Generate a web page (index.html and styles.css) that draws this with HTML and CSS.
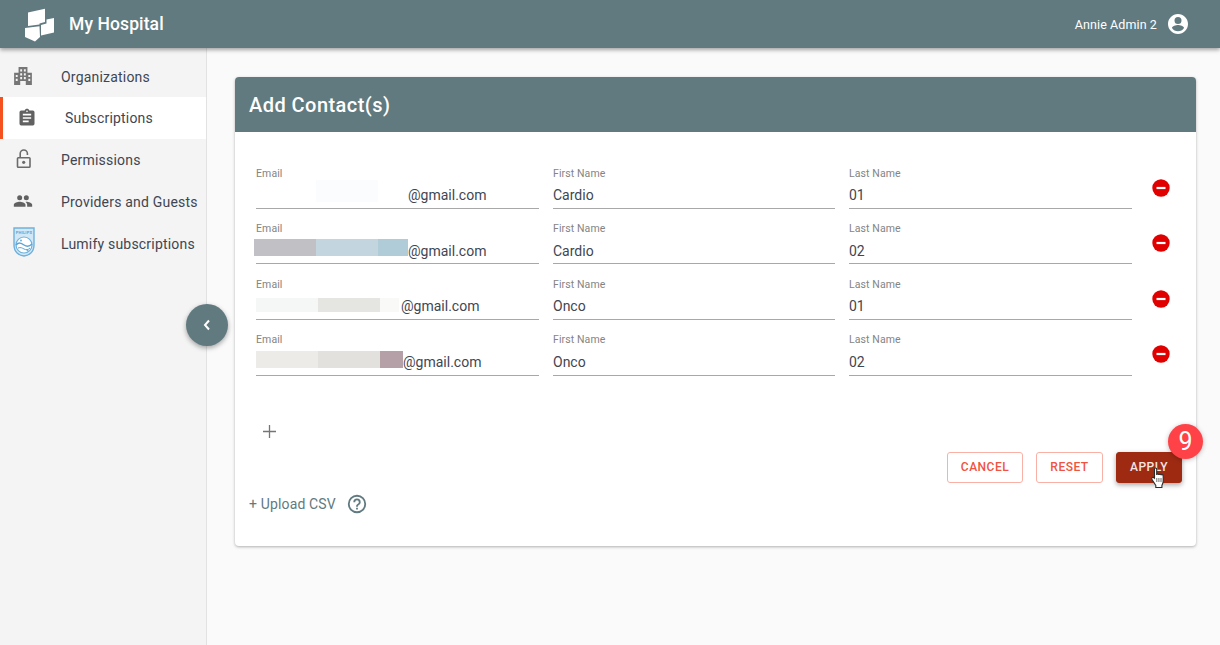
FILE: index.html
```html
<!DOCTYPE html>
<html lang="en">
<head>
<meta charset="utf-8">
<title>My Hospital</title>
<link rel="stylesheet" href="styles.css">
</head>
<body>
<header class="topbar">
  <div class="brand">
    <svg class="logo" viewBox="0 0 32 36"><path fill="#fff" d="M4 4.500 21 .7V14l-5.500 1.500v1L4 18zM22.500 11.500 30 10v14.500l-13 3V17l5.500-1.500zM1 20l14.500-1.700L16 29l-5 4.500L1 29z"/></svg>
    <span class="brand-name">My Hospital</span>
  </div>
  <div class="user">
    <span>Annie Admin 2</span>
    <svg class="user-icon" viewBox="0 0 24 24"><path fill="#fff" d="M12 2C6.480 2 2 6.480 2 12s4.480 10 10 10 10-4.480 10-10S17.520 2 12 2zm0 3a3.500 3.500 0 1 1 0 7 3.500 3.500 0 0 1 0-7zm0 14.200a7.200 7.200 0 0 1-6-3.220c.03-1.990 4-3.080 6-3.080s5.970 1.090 6 3.080a7.200 7.200 0 0 1-6 3.220z"/></svg>
  </div>
</header>
<div class="shell">
  <nav class="sidebar">
    <a class="nav-item">
      <svg class="nav-icon" viewBox="0 0 18 18"><path fill="#767676" fill-rule="evenodd" d="M5 1h8v5h4v11H1V6h4zM6.500 3v2h1.700V3zm3.300 0v2h1.700V3zM6.500 6.500v2h1.700v-2zm3.300 0v2h1.700v-2zM2.500 8v2h1.700V8zm0 3.500v2h1.700v-2zM6.500 10v2h1.700v-2zm3.300 0v2h1.700v-2zM13.800 8v2h1.700V8zm0 3.500v2h1.700v-2zM6.500 13.500V17h5v-3.500z"/></svg>
      <span>Organizations</span>
    </a>
    <a class="nav-item active">
      <svg class="nav-icon" viewBox="0 0 24 24"><path fill="#616161" d="M19 3h-4.180C14.400 1.840 13.300 1 12 1s-2.400.84-2.820 2H5a2 2 0 0 0-2 2v14a2 2 0 0 0 2 2h14a2 2 0 0 0 2-2V5a2 2 0 0 0-2-2zm-7 0a1 1 0 1 1 0 2 1 1 0 0 1 0-2zm2 14H7v-2h7zm3-4H7v-2h10zm0-4H7V7h10z"/></svg>
      <span>Subscriptions</span>
    </a>
    <a class="nav-item">
      <svg class="nav-icon" viewBox="0 0 20 20"><rect x="4.500" y="8.700" width="12.500" height="9.600" rx=".8" fill="none" stroke="#6b6b6b" stroke-width="1.600"/><path fill="none" stroke="#6b6b6b" stroke-width="1.600" d="M7.200 8.500V4.600a3.600 3.600 0 0 1 7.200 0V6"/><circle cx="10.700" cy="13.300" r="1.600" fill="#6b6b6b"/></svg>
      <span>Permissions</span>
    </a>
    <a class="nav-item">
      <svg class="nav-icon" viewBox="0 0 24 24"><path fill="#616161" d="M16 11a3 3 0 1 0 0-6 3 3 0 0 0 0 6zm-8 0a3 3 0 1 0 0-6 3 3 0 0 0 0 6zm0 2c-2.330 0-7 1.170-7 3.500V19h14v-2.500C15 14.170 10.330 13 8 13zm8 0c-.29 0-.62.02-.97.05C16.190 13.890 17 15.020 17 16.500V19h6v-2.500c0-2.330-4.670-3.500-7-3.500z"/></svg>
      <span>Providers and Guests</span>
    </a>
    <a class="nav-item">
      <svg class="nav-icon philips" viewBox="0 0 22 30">
        <path fill="#d3e8f6" stroke="#6fb1dc" stroke-width="1.400" d="M1 1h20v17c0 7-5 10.500-10 11C6 28.500 1 25 1 18z"/>
        <text class="shield-word" x="11" y="6.500" text-anchor="middle">PHILIPS</text>
        <circle cx="11" cy="18" r="8" fill="#fff" stroke="#6fb1dc" stroke-width="1.200"/>
        <path fill="none" stroke="#5aa5d6" stroke-width="1.500" d="M3 18c3-3 5-2 8 0s5 2 8-1"/>
        <path fill="none" stroke="#5aa5d6" stroke-width="1" d="M5 21c3-1 4 0 6 1s4 1 6-1"/>
        <circle cx="8" cy="13.500" r="1" fill="#6fb1dc"/>
        <circle cx="14.500" cy="23.500" r="1" fill="#6fb1dc"/>
      </svg>
      <span>Lumify subscriptions</span>
    </a>
    <button class="collapse" type="button" aria-label="Collapse">
      <svg viewBox="0 0 10 12" width="10" height="12"><path fill="none" stroke="#fff" stroke-width="2" d="M7 1.500 3 6l4 4.500"/></svg>
    </button>
  </nav>
  <main class="content">
    <section class="card">
      <h1 class="card-title">Add Contact(s)</h1>
      <div class="card-body">
        <div class="rows">
          <div class="row">
            <div class="field">
              <label>Email</label>
              <div class="value">
                <span class="mask first">
                  <i class="m w60"></i><i class="m w62 c1b"></i><i class="m w30"></i>
                </span><span>@gmail.com</span>
              </div>
            </div>
            <div class="field"><label>First Name</label><div class="value">Cardio</div></div>
            <div class="field"><label>Last Name</label><div class="value">01</div></div>
            <svg class="remove" viewBox="0 0 18 18"><circle cx="9" cy="9" r="8.700" fill="#e00000"/><rect x="4.500" y="7.900" width="9" height="2.200" fill="#fff"/></svg>
          </div>
          <div class="row">
            <div class="field">
              <label>Email</label>
              <div class="value">
                <span class="mask second">
                  <i class="m w62 c2a"></i><i class="m w62 c2b"></i><i class="m w30 c2c"></i>
                </span><span>@gmail.com</span>
              </div>
            </div>
            <div class="field"><label>First Name</label><div class="value">Cardio</div></div>
            <div class="field"><label>Last Name</label><div class="value">02</div></div>
            <svg class="remove" viewBox="0 0 18 18"><circle cx="9" cy="9" r="8.700" fill="#e00000"/><rect x="4.500" y="7.900" width="9" height="2.200" fill="#fff"/></svg>
          </div>
          <div class="row">
            <div class="field">
              <label>Email</label>
              <div class="value">
                <span class="mask third">
                  <i class="m w62 c3a"></i><i class="m w62 c3b"></i><i class="m w19 c3c"></i>
                </span><span>@gmail.com</span>
              </div>
            </div>
            <div class="field"><label>First Name</label><div class="value">Onco</div></div>
            <div class="field"><label>Last Name</label><div class="value">01</div></div>
            <svg class="remove" viewBox="0 0 18 18"><circle cx="9" cy="9" r="8.700" fill="#e00000"/><rect x="4.500" y="7.900" width="9" height="2.200" fill="#fff"/></svg>
          </div>
          <div class="row">
            <div class="field">
              <label>Email</label>
              <div class="value">
                <span class="mask fourth">
                  <i class="m w62 c4a"></i><i class="m w62 c4b"></i><i class="m w23 c4c"></i>
                </span><span>@gmail.com</span>
              </div>
            </div>
            <div class="field"><label>First Name</label><div class="value">Onco</div></div>
            <div class="field"><label>Last Name</label><div class="value">02</div></div>
            <svg class="remove" viewBox="0 0 18 18"><circle cx="9" cy="9" r="8.700" fill="#e00000"/><rect x="4.500" y="7.900" width="9" height="2.200" fill="#fff"/></svg>
          </div>
        </div>
        <svg class="add" viewBox="0 0 14 14"><path fill="#757575" d="M6.300 0h1.400v6.300H14v1.400H7.700V14H6.300V7.700H0V6.300h6.300z"/></svg>
        <div class="actions">
          <button class="btn" type="button">CANCEL</button>
          <button class="btn" type="button">RESET</button>
          <div class="apply-wrap">
            <button class="btn primary" type="button">APPLY</button>
            <span class="badge">9</span>
            <svg class="hand" viewBox="1 0 14 22"><path fill="#fff" stroke="#2b2b2b" stroke-width="1.100" d="M4.500 2c0-1.400 2.200-1.400 2.200 0v6c.2-1.300 2-1.300 2.200 0 .2-1.100 2-1.100 2.200.2.300-.9 2-.8 2.100.5v5.300c0 2-.8 3-1.300 4.500v2H5.800v-2L2 12.500c-1-1.600.8-3 2.500-1.300z"/><path stroke="#2b2b2b" stroke-width=".7" d="M6.800 11v4M8.900 11v4M11 11v4"/></svg>
          </div>
        </div>
        <div class="upload">
          <span>+ Upload CSV</span>
          <svg class="help" viewBox="0 0 24 24"><path fill="#607a80" d="M11 18h2v-2h-2zm1-16a10 10 0 1 0 0 20 10 10 0 0 0 0-20zm0 18a8 8 0 1 1 0-16 8 8 0 0 1 0 16zm0-14a4 4 0 0 0-4 4h2a2 2 0 1 1 4 0c0 2-3 1.750-3 5h2c0-2.250 3-2.500 3-5a4 4 0 0 0-4-4z"/></svg>
        </div>
      </div>
    </section>
  </main>
</div>
</body>
</html>
```

FILE: styles.css
```css
* { box-sizing: border-box; }
html, body { margin: 0; height: 100%; overflow: hidden; }
body { font-family: Roboto, "Liberation Sans", sans-serif; background: #fafafa; color: #3f4652; }

.topbar {
  position: relative;
  z-index: 3;
  height: 48px;
  background: #607a80;
  color: #fff;
  display: flex;
  align-items: center;
  justify-content: space-between;
  padding: 0 30px 0 24px;
  box-shadow: 0 2px 4px rgba(0, 0, 0, .35);
}
.brand { display: flex; align-items: center; gap: 13px; }
.logo { width: 32px; height: 36px; display: block; margin-top: 4px; }
.brand-name { font-size: 17.500px; font-weight: 500; letter-spacing: .1px; }
.user { display: flex; align-items: center; gap: 9px; font-size: 12.500px; letter-spacing: .1px; }
.user-icon { width: 24px; height: 24px; display: block; }

.shell { display: flex; height: 597px; }
.sidebar {
  position: relative;
  width: 207px;
  flex: none;
  background: #f4f4f4;
  border-right: 1px solid #e2e2e2;
  padding-top: 7px;
}
.nav-item {
  display: flex;
  align-items: center;
  height: 41.800px;
  padding-left: 13px;
  font-size: 14px;
  letter-spacing: .2px;
  color: #3f4652;
  white-space: nowrap;
}
.nav-item span { margin-left: 28px; padding-top: 2px; }
.nav-item.active { background: #fff; border-left: 3px solid #f4511e; padding-left: 14px; }
.nav-item.active span { margin-left: 28px; padding-top: 0; }
.nav-icon { width: 20px; height: 20px; display: block; flex: none; }
.nav-icon.philips { width: 22px; height: 30px; margin-top: -2px; margin-right: -2px; }
.shield-word { font: 700 4px Roboto, "Liberation Sans", sans-serif; fill: #5aa5d6; }

.collapse {
  position: absolute;
  left: 186px;
  top: 256px;
  width: 42px;
  height: 42px;
  border: 0;
  border-radius: 50%;
  background: #607a80;
  box-shadow: 0 2px 5px rgba(0, 0, 0, .35);
  display: flex;
  align-items: center;
  justify-content: center;
  padding: 0;
}

.content { flex: 1; padding: 29px 24px 0 28px; }
.card {
  height: 469px;
  background: #fff;
  border-radius: 4px;
  box-shadow: 0 1px 3px rgba(0, 0, 0, .3);
}
.card-title {
  margin: 0;
  height: 55px;
  background: #607a80;
  color: #fff;
  border-radius: 4px 4px 0 0;
  font-size: 20px;
  font-weight: 500;
  line-height: 56px;
  padding-left: 14px;
  letter-spacing: .45px;
}
.card-body { padding: 34.600px 14px 0 14px; }
.rows { padding-left: 7px; }
.row {
  display: grid;
  grid-template-columns: 283px 282px 283px 18px;
  column-gap: 14px;
  height: 55.600px;
  align-items: start;
}
.field { height: 42.200px; border-bottom: 1px solid #a8a8a8; }
.field label { display: block; font-size: 10.500px; line-height: 12px; color: #848484; padding-top: 1px; height: 13px; letter-spacing: .1px; }
.value {
  display: flex;
  align-items: center;
  height: 21px;
  margin-top: 5px;
  font-size: 14px;
  color: #3f4652;
  white-space: nowrap;
}
.remove { width: 18px; height: 18px; margin: 12px 0 0 6px; display: block; }

.mask { display: flex; flex: none; height: 17px; }
.mask.first { width: 152px; height: 22px; margin-top: -8px; }
.mask.second { width: 154px; margin-left: -2px; margin-top: -6px; }
.mask.third { width: 145px; height: 14px; margin-top: -2px; }
.mask.fourth { width: 147px; margin-top: -5px; }
.m { display: block; height: 100%; }
.w60 { width: 60px; }
.w62 { width: 62px; }
.w19 { width: 19px; }
.w23 { width: 23px; }
.w30 { width: 30px; }
.c1b { background: #fbfcfd; }
.c2a { background: #c0c0c5; }
.c2b { background: #c3d6e0; }
.c2c { background: #b0ccd8; }
.c3a { background: #f5f6f6; }
.c3b { background: #e5e5e1; }
.c3c { background: #f9f9f8; }
.c4a { background: #edebe7; }
.c4b { background: #e2e1dd; }
.c4c { background: #b5a0a7; }

.add { display: block; width: 13px; height: 13px; margin: 36px 0 0 14px; }

.actions {
  display: flex;
  justify-content: flex-end;
  gap: 13px;
  margin-top: 14px;
}
.apply-wrap { position: relative; }
.btn {
  height: 31px;
  width: 76px;
  padding: 0;
  border: 1px solid #f9b1a6;
  border-radius: 3px;
  background: #fff;
  color: #f0533f;
  font: 500 12px Roboto, "Liberation Sans", sans-serif;
  letter-spacing: .5px;
}
.btn:nth-child(2) { width: 67px; }
.btn.primary { width: 66px; background: #9f2a12; border-color: #9f2a12; color: #f4e5e1; box-shadow: 0 2px 5px rgba(0, 0, 0, .35); }
.badge {
  position: absolute;
  right: -21px;
  top: -28px;
  width: 35px;
  height: 35px;
  border-radius: 50%;
  background: #ff4248;
  color: #fff;
  font-size: 25px;
  line-height: 35px;
  text-align: center;
  box-shadow: 0 1px 5px rgba(0, 0, 0, .25);
}
.hand { position: absolute; left: 34px; top: 15px; width: 16px; height: 22px; }

.upload {
  display: flex;
  align-items: center;
  gap: 10px;
  margin-top: 10px;
  font-size: 14px;
  letter-spacing: .15px;
  color: #607a80;
}
.help { width: 22px; height: 22px; display: block; }
```
